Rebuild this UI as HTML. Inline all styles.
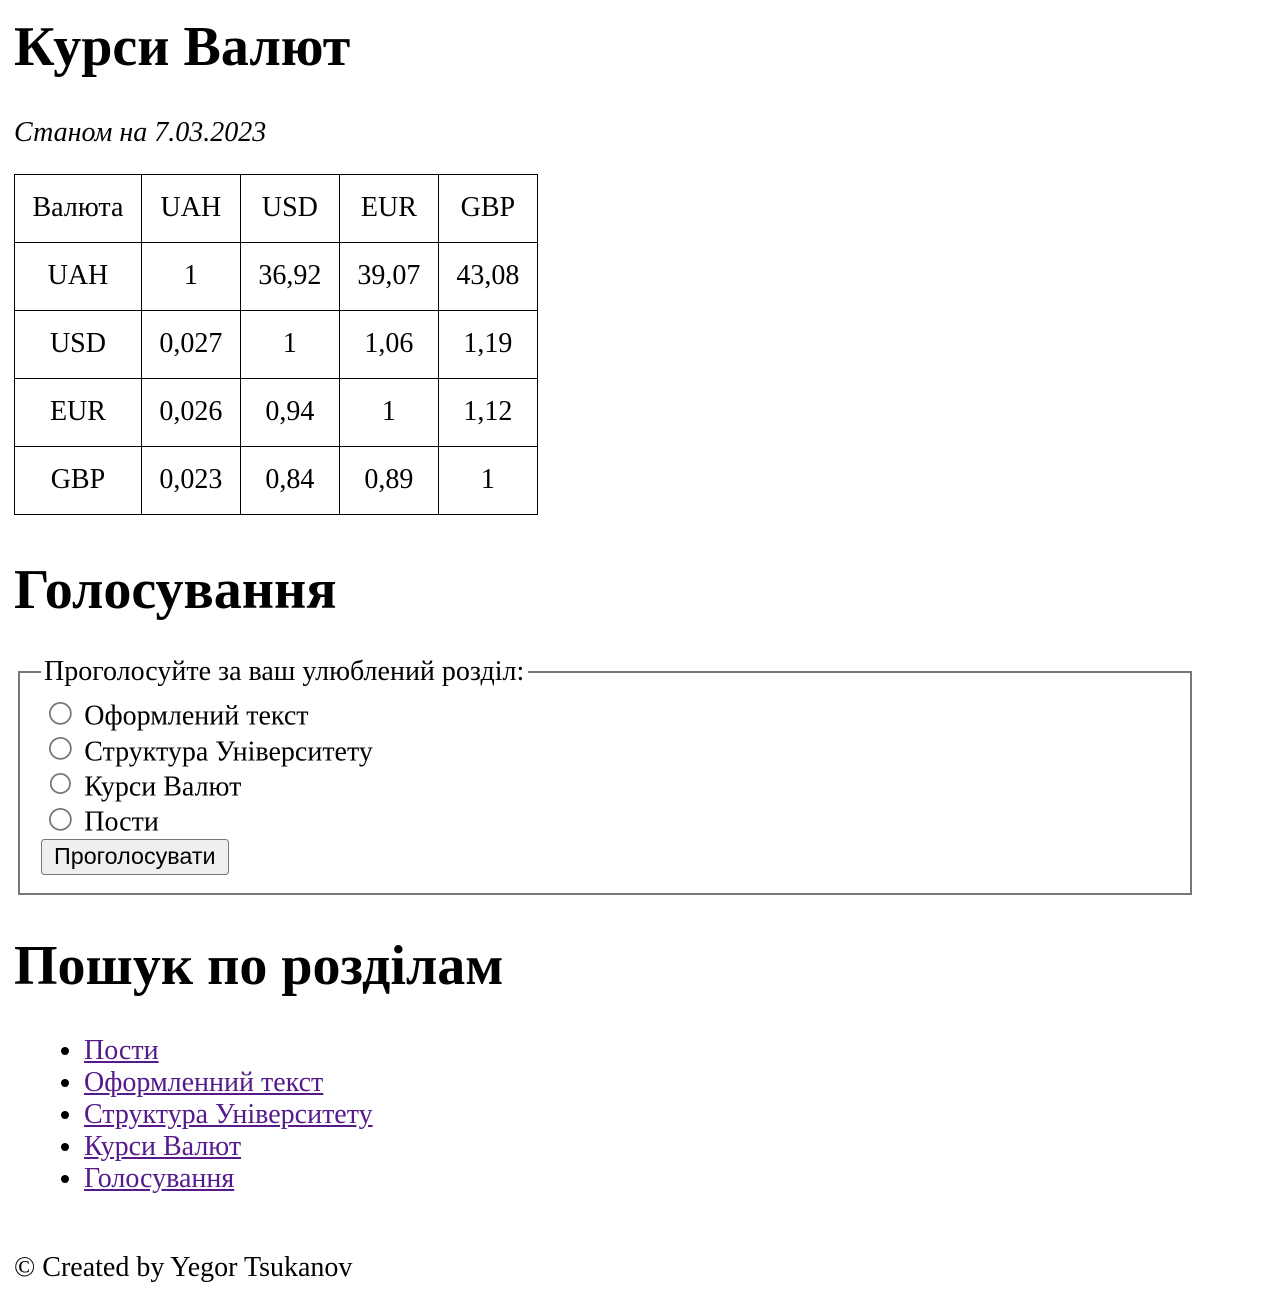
<!DOCTYPE html>
<html><head><meta charset="utf-8"><style>
html{zoom:1.75}
body{margin:8px;font-family:"Liberation Serif","DejaVu Serif",serif;font-size:16px;color:#000;background:#fff}
h1{font-size:2em;margin:0.67em 0}
h1:first-child{margin-top:0.27em}
h1.g{margin-top:calc(0.67em + 3px)}
p{margin:1em 0 0.9em}
table{border-collapse:collapse}
td{border:1px solid #000;padding:10px;text-align:center}
form{margin-top:-2px}
fieldset{width:645px;border:1.2px solid #767676;margin:0 2px;padding:0.35em 0.75em 0.625em}
legend{padding:0 2px}
input[type=radio]{margin:2.6px 3px 0 5px}
button{font-family:"Liberation Sans",sans-serif;font-size:13.33px}
a{color:#551a8b}
ul{margin:1em 0;padding-left:40px}
h1.s{margin-top:calc(0.67em + 1px)}
footer{margin-top:-2px}
</style></head><body>
<h1>Курси Валют</h1>
<p><i>Станом на 7.03.2023</i></p>
<table>
<tr><td>Валюта</td><td>UAH</td><td>USD</td><td>EUR</td><td>GBP</td></tr>
<tr><td>UAH</td><td>1</td><td>36,92</td><td>39,07</td><td>43,08</td></tr>
<tr><td>USD</td><td>0,027</td><td>1</td><td>1,06</td><td>1,19</td></tr>
<tr><td>EUR</td><td>0,026</td><td>0,94</td><td>1</td><td>1,12</td></tr>
<tr><td>GBP</td><td>0,023</td><td>0,84</td><td>0,89</td><td>1</td></tr>
</table>
<h1 class="g">Голосування</h1>
<form><fieldset><legend>Проголосуйте за ваш улюблений розділ:</legend>
<input type="radio" name="v"> Оформлений текст<br>
<input type="radio" name="v"> Структура Університету<br>
<input type="radio" name="v"> Курси Валют<br>
<input type="radio" name="v"> Пости<br>
<button type="button">Проголосувати</button>
</fieldset></form>
<h1 class="s">Пошук по розділам</h1>
<ul>
<li><a href="#">Пости</a></li>
<li><a href="#">Оформленний текст</a></li>
<li><a href="#">Структура Університету</a></li>
<li><a href="#">Курси Валют</a></li>
<li><a href="#">Голосування</a></li>
</ul>
<br>
<footer>© Created by Yegor Tsukanov</footer>
</body></html>
